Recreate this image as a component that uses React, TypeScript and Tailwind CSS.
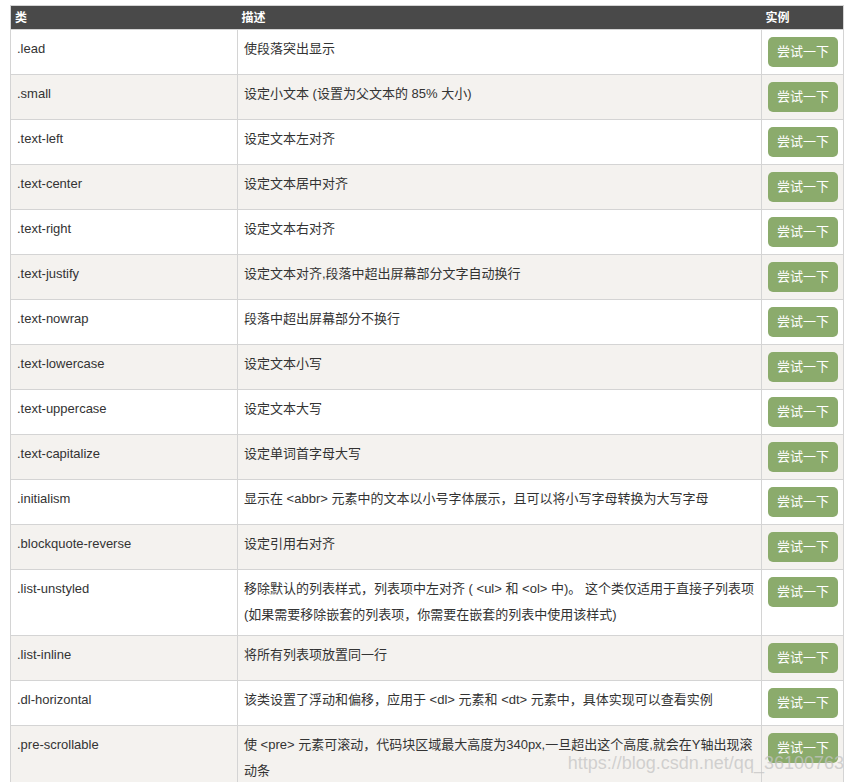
const rows: { cls: string; desc: string }[] = [
  { cls: ".lead", desc: "使段落突出显示" },
  { cls: ".small", desc: "设定小文本 (设置为父文本的 85% 大小)" },
  { cls: ".text-left", desc: "设定文本左对齐" },
  { cls: ".text-center", desc: "设定文本居中对齐" },
  { cls: ".text-right", desc: "设定文本右对齐" },
  { cls: ".text-justify", desc: "设定文本对齐,段落中超出屏幕部分文字自动换行" },
  { cls: ".text-nowrap", desc: "段落中超出屏幕部分不换行" },
  { cls: ".text-lowercase", desc: "设定文本小写" },
  { cls: ".text-uppercase", desc: "设定文本大写" },
  { cls: ".text-capitalize", desc: "设定单词首字母大写" },
  { cls: ".initialism", desc: "显示在 <abbr> 元素中的文本以小号字体展示，且可以将小写字母转换为大写字母" },
  { cls: ".blockquote-reverse", desc: "设定引用右对齐" },
  {
    cls: ".list-unstyled",
    desc: "移除默认的列表样式，列表项中左对齐 ( <ul> 和 <ol> 中)。 这个类仅适用于直接子列表项 (如果需要移除嵌套的列表项，你需要在嵌套的列表中使用该样式)",
  },
  { cls: ".list-inline", desc: "将所有列表项放置同一行" },
  { cls: ".dl-horizontal", desc: "该类设置了浮动和偏移，应用于 <dl> 元素和 <dt> 元素中，具体实现可以查看实例" },
  {
    cls: ".pre-scrollable",
    desc: "使 <pre> 元素可滚动，代码块区域最大高度为340px,一旦超出这个高度,就会在Y轴出现滚动条",
  },
];

export default function App() {
  return (
    <div className="relative h-[782px] w-[853px] overflow-hidden bg-white pt-[5px] pl-[10px] font-['Liberation_Sans','Noto_Sans_CJK_SC',sans-serif] text-[13px] text-[#333]">
      <table className="w-[833px] table-fixed border-collapse border border-[#d4d4d4]">
        <colgroup>
          <col className="w-[227px]" />
          <col className="w-[524px]" />
          <col className="w-[82px]" />
        </colgroup>
        <thead>
          <tr className="h-[24px] bg-[#494949] text-left text-[12px] font-bold text-white">
            <th className="px-[4px] py-0 font-bold">类</th>
            <th className="px-[4px] py-0 font-bold">描述</th>
            <th className="px-[4px] py-0 font-bold">实例</th>
          </tr>
        </thead>
        <tbody>
          {rows.map((r, i) => (
            <tr key={r.cls} className={i % 2 === 1 ? "bg-[#f4f2ef]" : "bg-white"}>
              <td className="border border-[#d4d4d4] px-[6px] pt-[6px] pb-[7px] align-top leading-[26px]">{r.cls}</td>
              <td className="border border-[#d4d4d4] px-[6px] pt-[6px] pb-[7px] align-top leading-[26px]">{r.desc}</td>
              <td className="border border-[#d4d4d4] pl-[6px] pr-[4px] pt-[7px] pb-[7px] align-top">
                <button className="flex h-[30px] w-[70px] items-center justify-center rounded-[5px] bg-[#8bab6c] text-[13px] text-white">
                  尝试一下
                </button>
              </td>
            </tr>
          ))}
        </tbody>
      </table>
      <div className="pointer-events-none absolute top-[752px] right-[9px] font-['Liberation_Sans_Narrow','Liberation_Sans',sans-serif] text-[18px] leading-[22px] text-[#c4c4c4]/75">
        https://blog.csdn.net/qq_36100763
      </div>
    </div>
  );
}
